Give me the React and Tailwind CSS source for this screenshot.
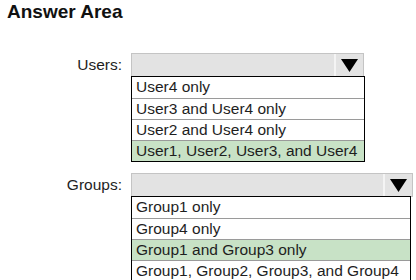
import React from 'react';

const users = ['User4 only', 'User3 and User4 only', 'User2 and User4 only', 'User1, User2, User3, and User4'];
const groups = ['Group1 only', 'Group4 only', 'Group1 and Group3 only', 'Group1, Group2, Group3, and Group4'];

const Dropdown = ({ label, items, selected, width, listWidth }) => (
    <div className="flex items-start">
        <div className="w-[123px] h-[24px] flex items-center justify-end pr-[1px] text-[15.5px] text-[#1e1e1e]">{label}</div>
        <div className="ml-[8px]">
            <div className={`${width} h-[24px] flex bg-[#e3e3e3] border border-[#c4c4c4]`}>
                <div className="flex-1"></div>
                <div className="w-[29px] h-full border-l-2 border-[#f4f4f4] flex items-center justify-center">
                    <svg width="17" height="13" viewBox="0 0 17 13">
                        <polygon points="0,0 17,0 8.5,13" fill="#000" />
                    </svg>
                </div>
            </div>
            <div className={`${listWidth} border border-black -mt-[1px]`}>
                {items.map((item, i) => (
                    <div
                        key={item}
                        className={`h-[21px] leading-[20px] pl-[4px] text-[15.5px] text-[#1e1e1e] whitespace-nowrap ${i > 0 ? 'border-t border-[#9a9a9a]' : ''} ${i === selected ? 'bg-[#c8e2c6]' : 'bg-white'}`}
                    >
                        {item}
                    </div>
                ))}
            </div>
        </div>
    </div>
);

export default function App() {
    return (
        <div className="w-[416px] h-[280px] bg-white overflow-hidden font-['Liberation_Sans',Arial,sans-serif]">
            <h1 className="pl-[7px] pt-[1px] text-[19px] leading-[22px] font-bold text-[#111]">Answer Area</h1>
            <div className="mt-[30px]">
                <Dropdown label="Users:" items={users} selected={3} width="w-[233px]" listWidth="w-[234px]" />
            </div>
            <div className="mt-[11px]">
                <Dropdown label="Groups:" items={groups} selected={2} width="w-[282px]" listWidth="w-[280px]" />
            </div>
        </div>
    );
}
